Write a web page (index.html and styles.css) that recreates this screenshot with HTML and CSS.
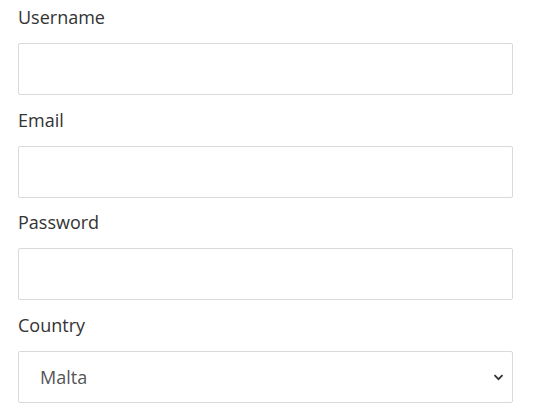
FILE: index.html
```html
<!DOCTYPE html>
<html lang="en">
<head>
    <meta charset="UTF-8">
    <meta name="viewport" content="width=device-width, initial-scale=1.0">
    <title>Sign up</title>
    <link rel="stylesheet" href="styles.css">
</head>
<body>
    <form class="signup">
        <label for="username">Username</label>
        <input type="text" id="username">
        <label for="email">Email</label>
        <input type="email" id="email">
        <label for="password">Password</label>
        <input type="password" id="password">
        <label for="country">Country</label>
        <div class="select-wrap">
            <select id="country">
                <option>Malta</option>
                <option>Italy</option>
                <option>France</option>
            </select>
            <svg class="chevron" width="11" height="7" viewBox="0 0 11 7">
                <path d="M1.5 1.2 L5.5 5.2 L9.5 1.2" fill="none" stroke="#333" stroke-width="1.8"/>
            </svg>
        </div>
    </form>
</body>
</html>
```

FILE: styles.css
```css
body {
    margin: 0;
    font-family: "Open Sans", sans-serif;
    background: #fff;
    color: #333;
}
.signup {
    padding: 5px 0 0 18px;
    width: 495px;
}
.signup label {
    display: block;
    font-size: 18px;
    line-height: 25px;
    margin-bottom: 13px;
}
.signup input,
.signup select {
    display: block;
    box-sizing: border-box;
    width: 495px;
    height: 52px;
    margin: 0 0 12.5px;
    border: 1px solid #d9d9d9;
    border-radius: 2px;
    background: #fff;
    font-family: inherit;
    font-size: 18px;
    color: #555;
    outline: none;
}
.signup input {
    padding: 0 21px;
}
.select-wrap {
    position: relative;
}
.signup select {
    appearance: none;
    -webkit-appearance: none;
    padding: 0 0 0 21px;
}
.chevron {
    position: absolute;
    right: 9px;
    top: 23px;
    pointer-events: none;
}
```
